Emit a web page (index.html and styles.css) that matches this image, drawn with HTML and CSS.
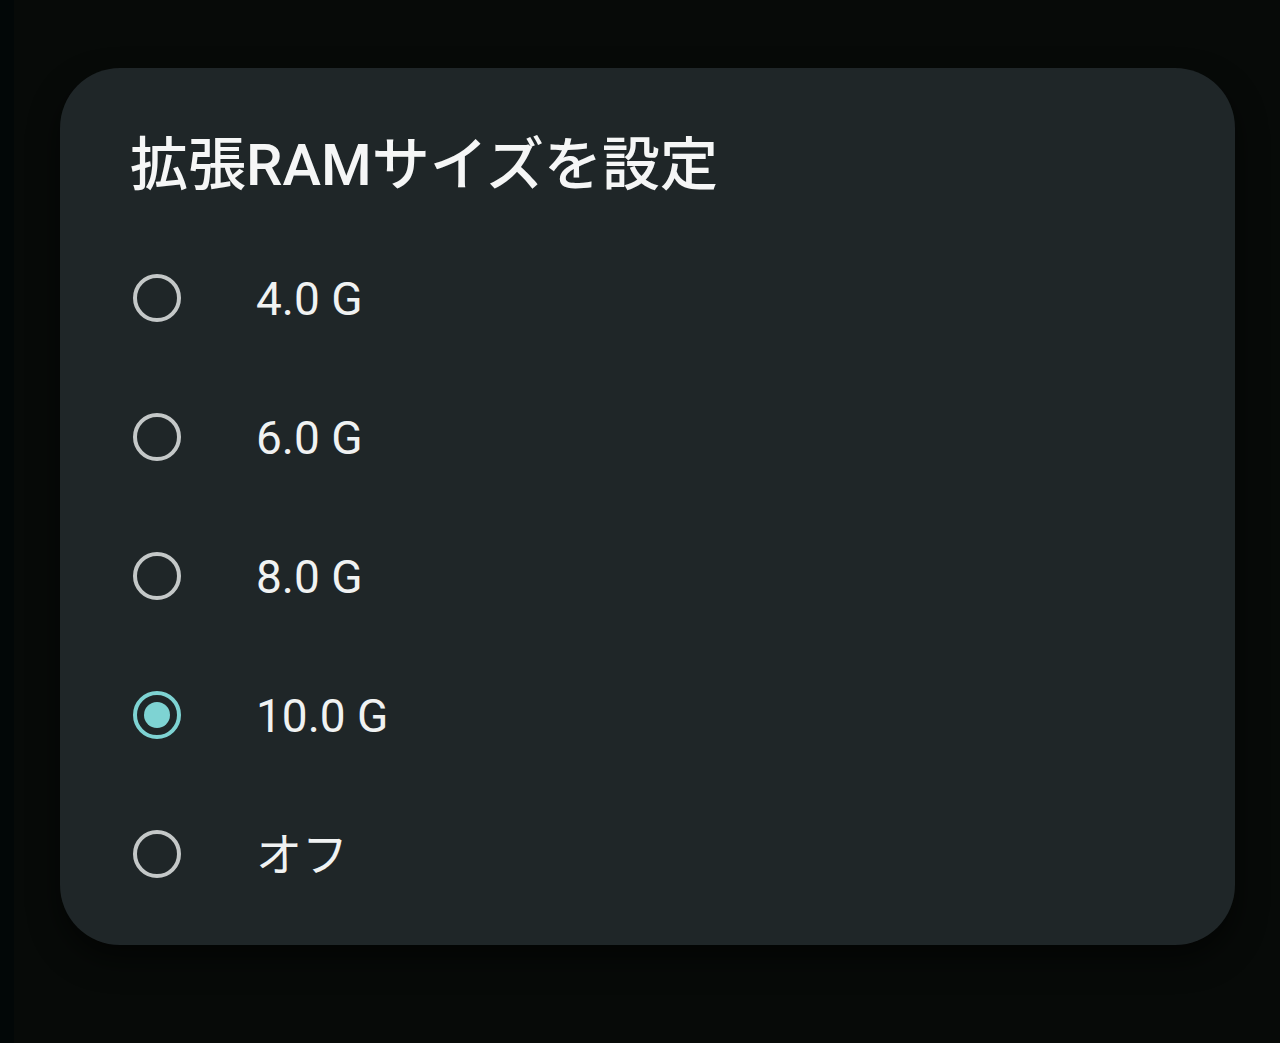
FILE: index.html
```html
<!DOCTYPE html>
<html lang="ja">
<head>
<meta charset="utf-8">
<link rel="stylesheet" href="styles.css">
</head>
<body>
<div class="screen">
  <div class="edge"></div>
  <div class="stage">
    <div class="dialog">
      <h1 class="title">拡張RAMサイズを設定</h1>
      <ul class="options">
        <li class="option"><span class="radio"></span><span class="label">4.0 G</span></li>
        <li class="option"><span class="radio"></span><span class="label">6.0 G</span></li>
        <li class="option"><span class="radio"></span><span class="label">8.0 G</span></li>
        <li class="option"><span class="radio checked"></span><span class="label">10.0 G</span></li>
        <li class="option"><span class="radio"></span><span class="label">オフ</span></li>
      </ul>
    </div>
  </div>
</div>
</body>
</html>
```

FILE: styles.css
```css
html, body {
  margin: 0;
  padding: 0;
  background: #070a08;
}
.screen {
  display: flex;
  width: 1280px;
  height: 1043px;
  overflow: hidden;
}
.edge {
  width: 14px;
  flex: none;
  background: #020707;
}
.stage {
  flex: 1;
  padding-top: 68px;
  padding-left: 46px;
}
.dialog {
  width: 1175px;
  height: 877px;
  box-sizing: border-box;
  background: #1f2628;
  border-radius: 60px;
  box-shadow: 0 14px 30px rgba(0, 0, 0, 0.55);
  padding: 64px 0 0 70px;
  font-family: Roboto, "Noto Sans CJK JP", sans-serif;
  color: #f2f4f4;
}
.title {
  margin: 0;
  font-size: 58px;
  line-height: 67px;
  font-weight: 500;
  letter-spacing: 0;
  color: #f5f6f6;
}
.options {
  list-style: none;
  margin: 29px 0 0;
  padding: 0;
}
.option {
  display: flex;
  align-items: center;
  height: 139px;
}
.radio {
  width: 48px;
  height: 48px;
  box-sizing: border-box;
  border: 4px solid #c4c8c8;
  border-radius: 50%;
  margin-left: 3px;
  margin-right: 75px;
  flex: none;
  display: flex;
  align-items: center;
  justify-content: center;
}
.radio.checked {
  border-color: #7ed3d3;
}
.radio.checked::after {
  content: "";
  width: 26px;
  height: 26px;
  border-radius: 50%;
  background: #7ed3d3;
}
.label {
  font-size: 46px;
  line-height: 1;
  font-weight: 400;
  padding-top: 3px;
  color: #f0f2f2;
}
```
